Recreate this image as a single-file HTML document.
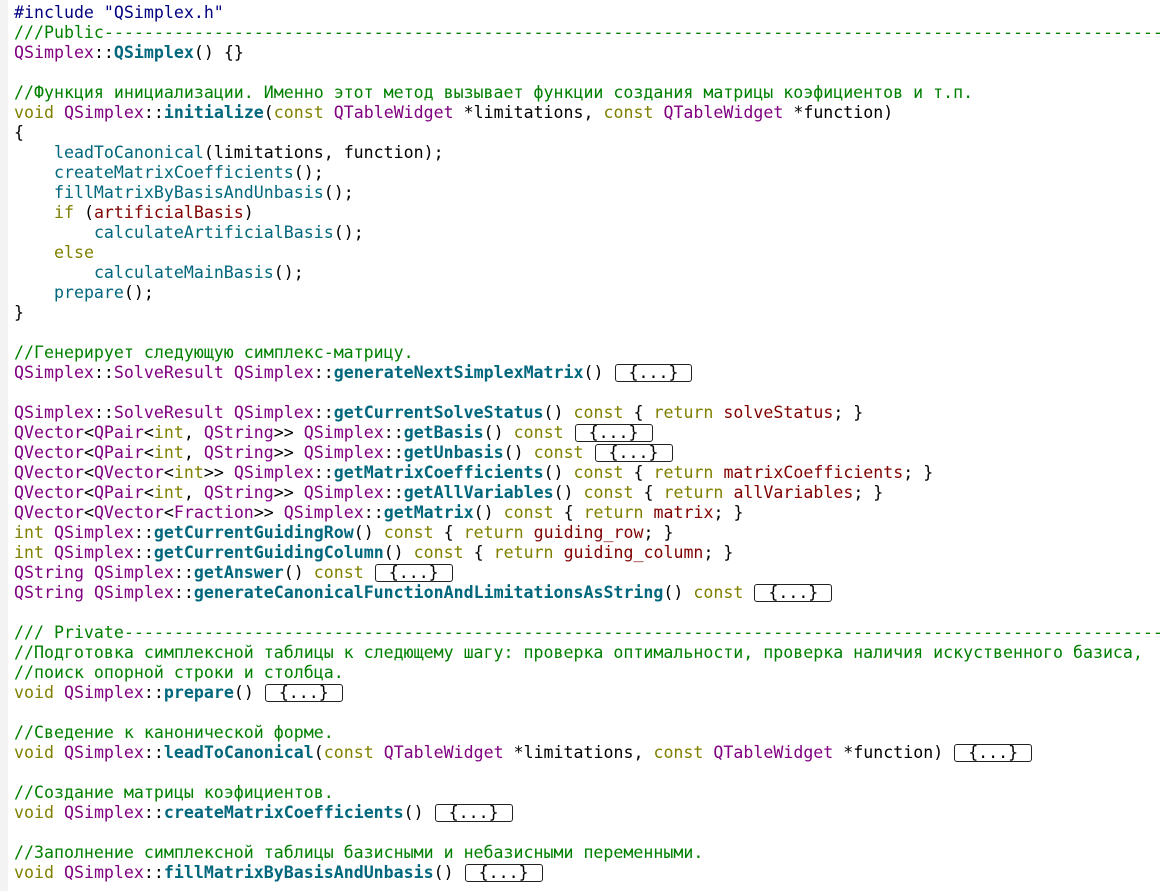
<!DOCTYPE html>
<html><head><meta charset="utf-8"><style>
body{margin:0;background:#fff;width:1163px;height:891px;overflow:hidden;position:relative}
#g{position:absolute;left:0;top:0;width:8px;height:891px;background:#f3f3f3}
pre{margin:0;position:absolute;left:14px;top:3px;font-family:"DejaVu Sans Mono","Liberation Mono",monospace;font-size:16.6px;line-height:20px;color:#000;white-space:pre;width:1148px;overflow:hidden}
.t{color:#800080}.k{color:#808000}.c{color:#008000}.f{color:#00677c;font-weight:bold}.n{color:#00677c}.m{color:#800000}.p{color:#000080}
.b{display:inline-block;border:1px solid #222;border-radius:3px;line-height:16px;padding:0 13px;margin-left:1px}
</style></head><body><div id="g"></div><pre><span class="p">#include "QSimplex.h"</span>
<span class="c">///Public------------------------------------------------------------------------------------------------------------------</span>
<span class="t">QSimplex</span>::<span class="f">QSimplex</span>() {}

<span class="c">//Функция инициализации. Именно этот метод вызывает функции создания матрицы коэфициентов и т.п.</span>
<span class="k">void</span> <span class="t">QSimplex</span>::<span class="f">initialize</span>(<span class="k">const</span> <span class="t">QTableWidget</span> *limitations, <span class="k">const</span> <span class="t">QTableWidget</span> *function)
{
    <span class="n">leadToCanonical</span>(limitations, function);
    <span class="n">createMatrixCoefficients</span>();
    <span class="n">fillMatrixByBasisAndUnbasis</span>();
    <span class="k">if</span> (<span class="m">artificialBasis</span>)
        <span class="n">calculateArtificialBasis</span>();
    <span class="k">else</span>
        <span class="n">calculateMainBasis</span>();
    <span class="n">prepare</span>();
}

<span class="c">//Генерирует следующую симплекс-матрицу.</span>
<span class="t">QSimplex</span>::<span class="t">SolveResult</span> <span class="t">QSimplex</span>::<span class="f">generateNextSimplexMatrix</span>() <span class="b">{...}</span>

<span class="t">QSimplex</span>::<span class="t">SolveResult</span> <span class="t">QSimplex</span>::<span class="f">getCurrentSolveStatus</span>() <span class="k">const</span> { <span class="k">return</span> <span class="m">solveStatus</span>; }
<span class="t">QVector</span>&lt;<span class="t">QPair</span>&lt;<span class="k">int</span>, <span class="t">QString</span>&gt;&gt; <span class="t">QSimplex</span>::<span class="f">getBasis</span>() <span class="k">const</span> <span class="b">{...}</span>
<span class="t">QVector</span>&lt;<span class="t">QPair</span>&lt;<span class="k">int</span>, <span class="t">QString</span>&gt;&gt; <span class="t">QSimplex</span>::<span class="f">getUnbasis</span>() <span class="k">const</span> <span class="b">{...}</span>
<span class="t">QVector</span>&lt;<span class="t">QVector</span>&lt;<span class="k">int</span>&gt;&gt; <span class="t">QSimplex</span>::<span class="f">getMatrixCoefficients</span>() <span class="k">const</span> { <span class="k">return</span> <span class="m">matrixCoefficients</span>; }
<span class="t">QVector</span>&lt;<span class="t">QPair</span>&lt;<span class="k">int</span>, <span class="t">QString</span>&gt;&gt; <span class="t">QSimplex</span>::<span class="f">getAllVariables</span>() <span class="k">const</span> { <span class="k">return</span> <span class="m">allVariables</span>; }
<span class="t">QVector</span>&lt;<span class="t">QVector</span>&lt;<span class="t">Fraction</span>&gt;&gt; <span class="t">QSimplex</span>::<span class="f">getMatrix</span>() <span class="k">const</span> { <span class="k">return</span> <span class="m">matrix</span>; }
<span class="k">int</span> <span class="t">QSimplex</span>::<span class="f">getCurrentGuidingRow</span>() <span class="k">const</span> { <span class="k">return</span> <span class="m">guiding_row</span>; }
<span class="k">int</span> <span class="t">QSimplex</span>::<span class="f">getCurrentGuidingColumn</span>() <span class="k">const</span> { <span class="k">return</span> <span class="m">guiding_column</span>; }
<span class="t">QString</span> <span class="t">QSimplex</span>::<span class="f">getAnswer</span>() <span class="k">const</span> <span class="b">{...}</span>
<span class="t">QString</span> <span class="t">QSimplex</span>::<span class="f">generateCanonicalFunctionAndLimitationsAsString</span>() <span class="k">const</span> <span class="b">{...}</span>

<span class="c">/// Private----------------------------------------------------------------------------------------------------------------</span>
<span class="c">//Подготовка симплексной таблицы к следющему шагу: проверка оптимальности, проверка наличия искуственного базиса,</span>
<span class="c">//поиск опорной строки и столбца.</span>
<span class="k">void</span> <span class="t">QSimplex</span>::<span class="f">prepare</span>() <span class="b">{...}</span>

<span class="c">//Сведение к канонической форме.</span>
<span class="k">void</span> <span class="t">QSimplex</span>::<span class="f">leadToCanonical</span>(<span class="k">const</span> <span class="t">QTableWidget</span> *limitations, <span class="k">const</span> <span class="t">QTableWidget</span> *function) <span class="b">{...}</span>

<span class="c">//Создание матрицы коэфициентов.</span>
<span class="k">void</span> <span class="t">QSimplex</span>::<span class="f">createMatrixCoefficients</span>() <span class="b">{...}</span>

<span class="c">//Заполнение симплексной таблицы базисными и небазисными переменными.</span>
<span class="k">void</span> <span class="t">QSimplex</span>::<span class="f">fillMatrixByBasisAndUnbasis</span>() <span class="b">{...}</span>
</pre></body></html>
